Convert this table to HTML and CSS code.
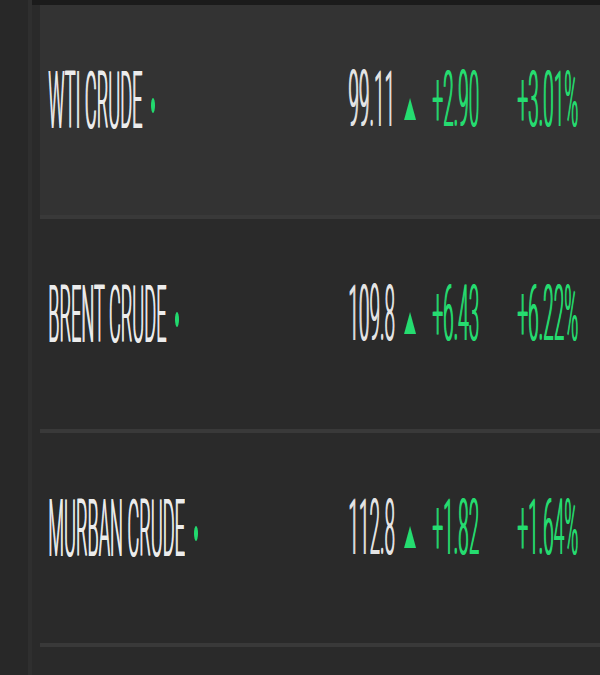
FILE: index.html
```html
<!DOCTYPE html>
<html lang="en">
<head>
<meta charset="utf-8">
<title>Crude Oil</title>
<link rel="stylesheet" href="styles.css">
</head>
<body>
<div class="page">
  <aside class="side"></aside>
  <main class="main">
    <div class="topbar"></div>
    <div class="list">
      <div class="row active">
        <div class="name"><span class="txt name-txt">WTI CRUDE</span><span class="dot"></span></div>
        <div class="price"><span class="txt num">99.11</span></div>
        <span class="tri"></span>
        <div class="chg"><span class="txt num up">+2.90</span></div>
        <div class="pct"><span class="txt num up">+3.01%</span></div>
      </div>
      <div class="row">
        <div class="name"><span class="txt name-txt">BRENT CRUDE</span><span class="dot"></span></div>
        <div class="price"><span class="txt num">109.8</span></div>
        <span class="tri"></span>
        <div class="chg"><span class="txt num up">+6.43</span></div>
        <div class="pct"><span class="txt num up">+6.22%</span></div>
      </div>
      <div class="row">
        <div class="name"><span class="txt name-txt">MURBAN CRUDE</span><span class="dot"></span></div>
        <div class="price"><span class="txt num">112.8</span></div>
        <span class="tri"></span>
        <div class="chg"><span class="txt num up">+1.82</span></div>
        <div class="pct"><span class="txt num up">+1.64%</span></div>
      </div>
    </div>
  </main>
</div>
</body>
</html>
```

FILE: styles.css
```css
html, body {
  margin: 0;
  padding: 0;
  background: #282828;
  font-family: Roboto, "Liberation Sans", Arial, sans-serif;
}

.page {
  display: flex;
  width: 600px;
  height: 675px;
  overflow: hidden;
}

.side {
  width: 28px;
  flex: none;
  background: #282828;
}

.main {
  flex: 1;
  display: flex;
  flex-direction: column;
  background: #2a2a2a;
  border-left: 4px solid #2f2f2f;
}

.topbar {
  height: 5px;
  background: #1b1b1b;
}

.list {
  margin-left: 8px;
  display: flex;
  flex-direction: column;
}

.row {
  height: 214px;
  box-sizing: border-box;
  display: flex;
  align-items: center;
  padding: 0 22px 18px 8px;
  border-bottom: 4px solid #393939;
}

.row.active {
  background: #333333;
}

.txt {
  display: inline-block;
  line-height: 20px;
  white-space: nowrap;
  font-weight: 300;
  text-shadow: 0.6px 0 0 currentColor;
}

.name {
  flex: 1;
  display: flex;
  align-items: center;
}

.name-txt {
  font-size: 18.2px;
  color: #ececec;
  transform: scaleY(4.42);
}

.dot {
  width: 4px;
  height: 15px;
  margin-left: 9px;
  margin-top: 8px;
  border-radius: 50%;
  background: #22d96e;
}

.num {
  font-size: 19px;
  color: #e4e4e4;
  transform: scaleY(4.12);
}

.num.up {
  color: #25dc70;
}

.price {
  width: 56px;
}

.tri {
  width: 12px;
  height: 22px;
  margin: 16px 16px 0 0;
  background: #25dc70;
  clip-path: polygon(50% 0, 100% 100%, 0 100%);
}

.chg {
  width: 85px;
}

.pct {
  flex: none;
}
```
